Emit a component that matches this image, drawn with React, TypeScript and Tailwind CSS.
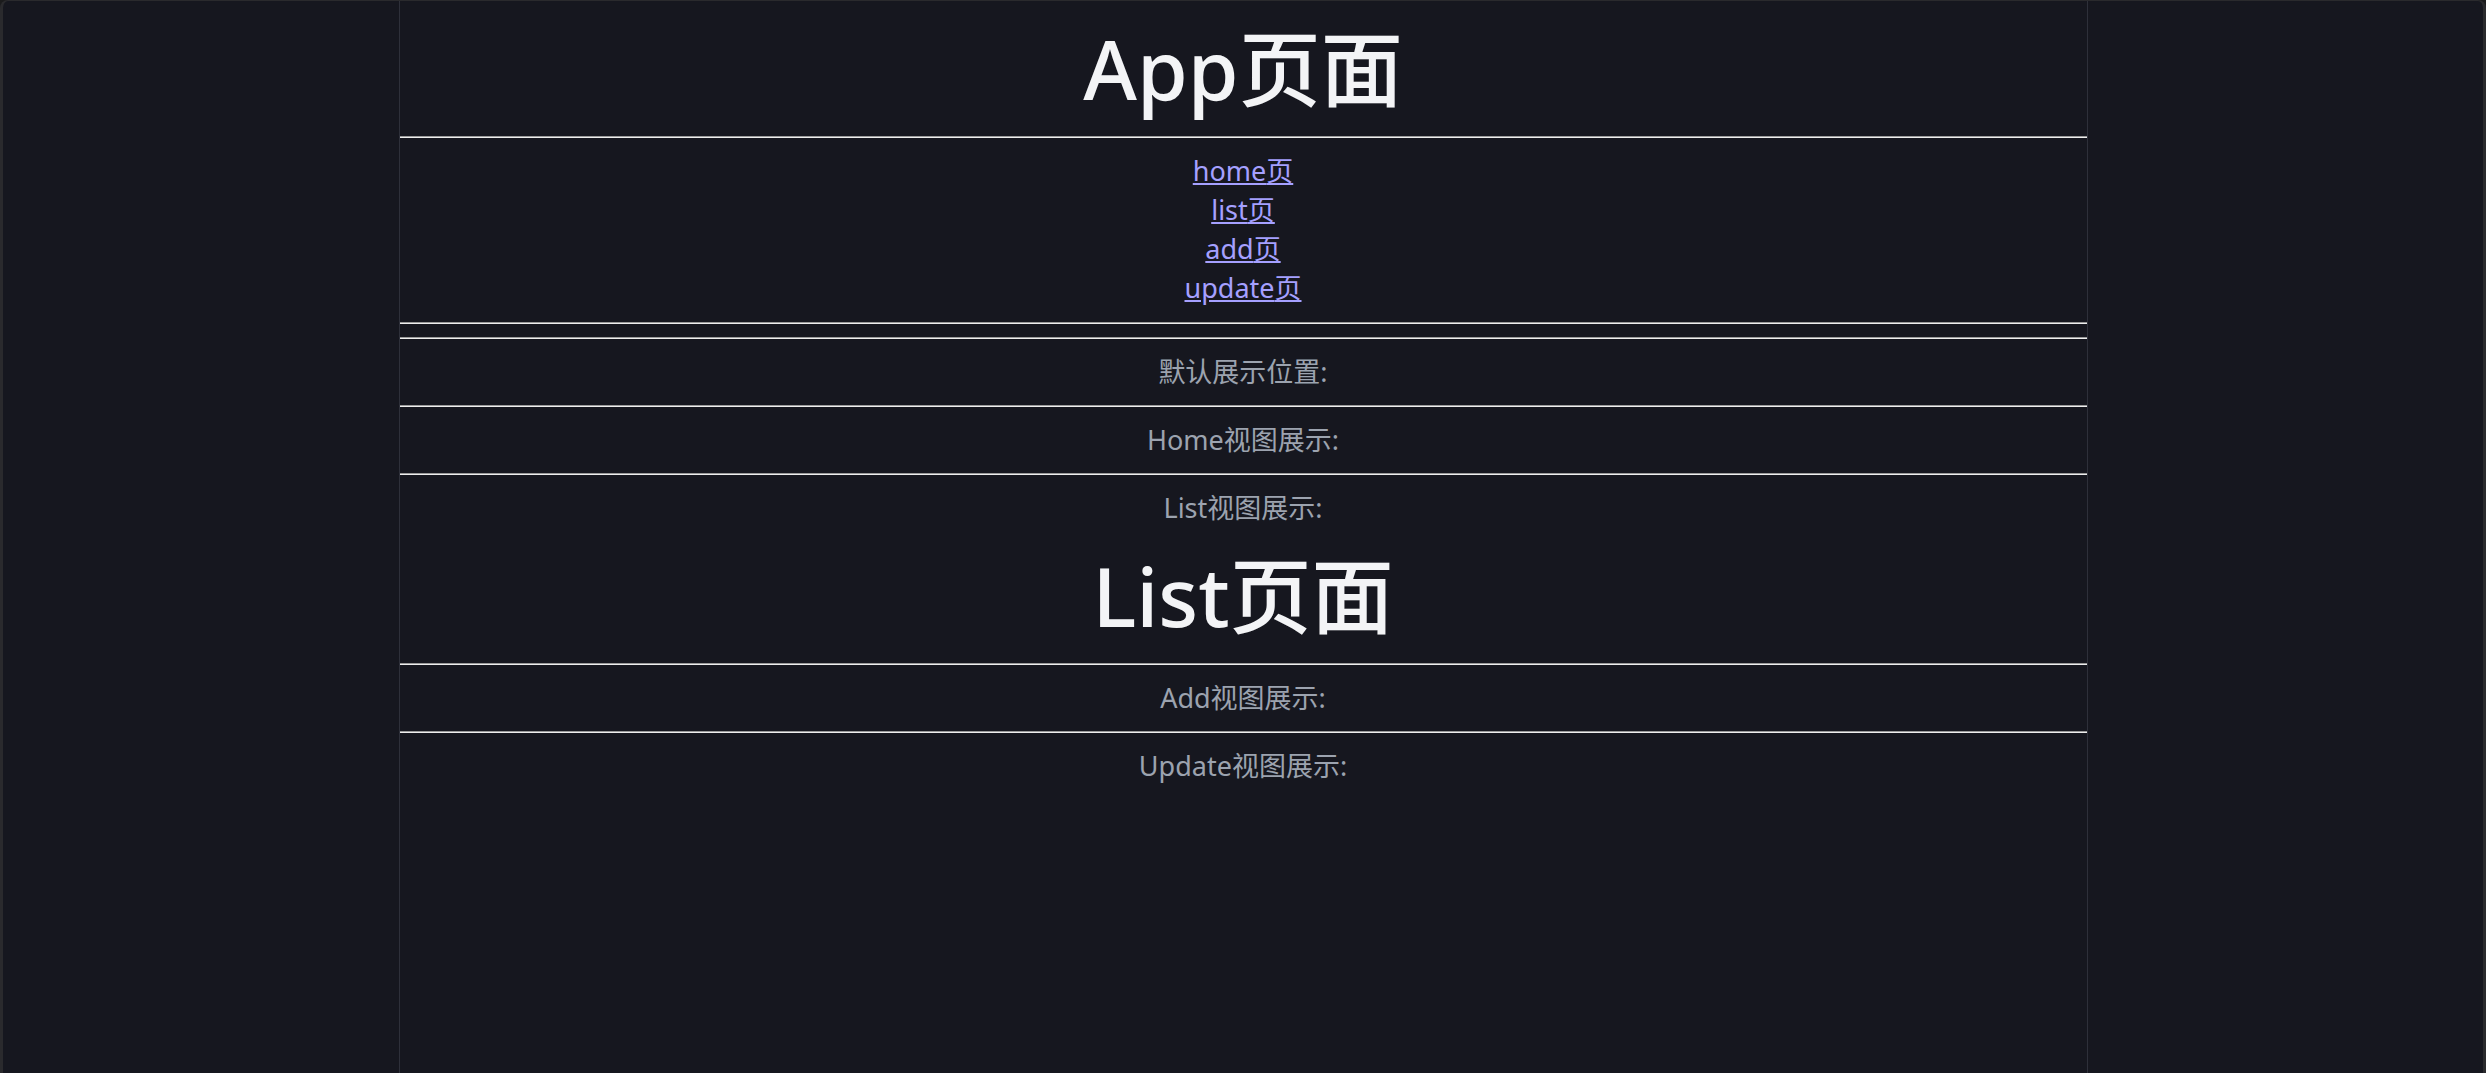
import type { ReactNode } from "react";

const links = ["home", "list", "add", "update"];

function Divider() {
  return <hr className="my-[13px] h-0 border-t border-b border-t-[#9a9a9a] border-b-[#eeeeee]" />;
}

function Title({ children }: { children: ReactNode }) {
  return (
    <h1 className="text-[82px] leading-[96px] font-medium text-[#f3f4f6]">{children}</h1>
  );
}

function Label({ children }: { children: ReactNode }) {
  return <p className="leading-[40px]">{children}</p>;
}

export default function App() {
  return (
    <div className="bg-[#1b1b1c]">
      <div className="flex min-h-screen flex-col rounded-t-lg border-x-3 border-t border-[#2a2a2d] bg-[#16171f] font-['Noto_Sans','Noto_Sans_CJK_SC',sans-serif] text-[27px] text-[#9ca3af]">
        <main className="mx-auto w-full max-w-[1689px] grow border-x border-[#2e303a] text-center">
          <header className="pt-[19px] pb-[7px]">
            <Title>App页面</Title>
          </header>
          <Divider />
          <nav className="flex flex-col items-center pb-[2px]">
            {links.map((name) => (
              <a key={name} href={`#${name}`} className="leading-[39px] text-[#a5a0ff] underline">
                {name}页
              </a>
            ))}
          </nav>
          <Divider />
          <Divider />
          <Label>默认展示位置:</Label>
          <Divider />
          <Label>Home视图展示:</Label>
          <Divider />
          <Label>List视图展示:</Label>
          <section className="pt-[19px] pb-[7px]">
            <Title>List页面</Title>
          </section>
          <Divider />
          <Label>Add视图展示:</Label>
          <Divider />
          <Label>Update视图展示:</Label>
        </main>
      </div>
    </div>
  );
}
